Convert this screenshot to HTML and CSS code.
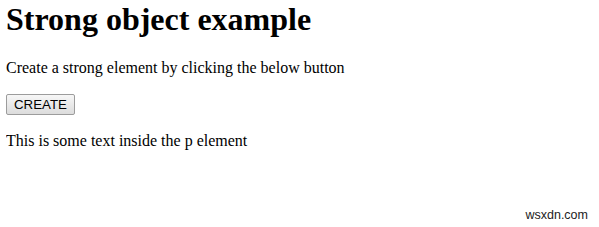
FILE: index.html
```html
<!DOCTYPE html>
<html lang="en">
<head>
    <meta charset="UTF-8">
    <title>Strong object example</title>
    <link rel="stylesheet" href="styles.css">
</head>
<body>
    <h1>Strong object example</h1>
    <p>Create a strong element by clicking the below button</p>
    <button class="create-btn" onclick="makeStrong()">CREATE</button>
    <p class="sample">This is some text inside the p element</p>

    <div class="watermark">wsxdn.com</div>

    <script>
        function makeStrong() {
            const strong = document.createElement('strong');
            strong.textContent = 'This is some strong text';
            document.body.appendChild(strong);
        }
    </script>
</body>
</html>
```

FILE: styles.css
```css
html, body {
    height: 100%;
}

body {
    font-family: "Liberation Serif", "Times New Roman", serif;
    font-size: 16px;
    color: #000;
    background: #fff;
    margin: 0 6px;
    position: relative;
}

h1 {
    font-size: 32px;
    margin: 1px 0 21px;
}

p {
    margin: 16px 0;
}

/* Button */
.create-btn {
    font-family: "Liberation Sans", Arial, sans-serif;
    font-size: 13.3px;
    color: #000;
    height: 21px;
    padding: 1px 7px;
    margin-top: 17px;
    background: linear-gradient(#f7f7f7, #dcdcdc);
    border: 1px solid #9c9c9c;
    border-radius: 2px;
    display: block;
}

.sample {
    margin-top: 17px;
}

/* Watermark */
.watermark {
    position: absolute;
    right: 5px;
    bottom: 5px;
    font-family: "Liberation Sans", Arial, sans-serif;
    font-size: 12.5px;
    color: #222;
}
```
